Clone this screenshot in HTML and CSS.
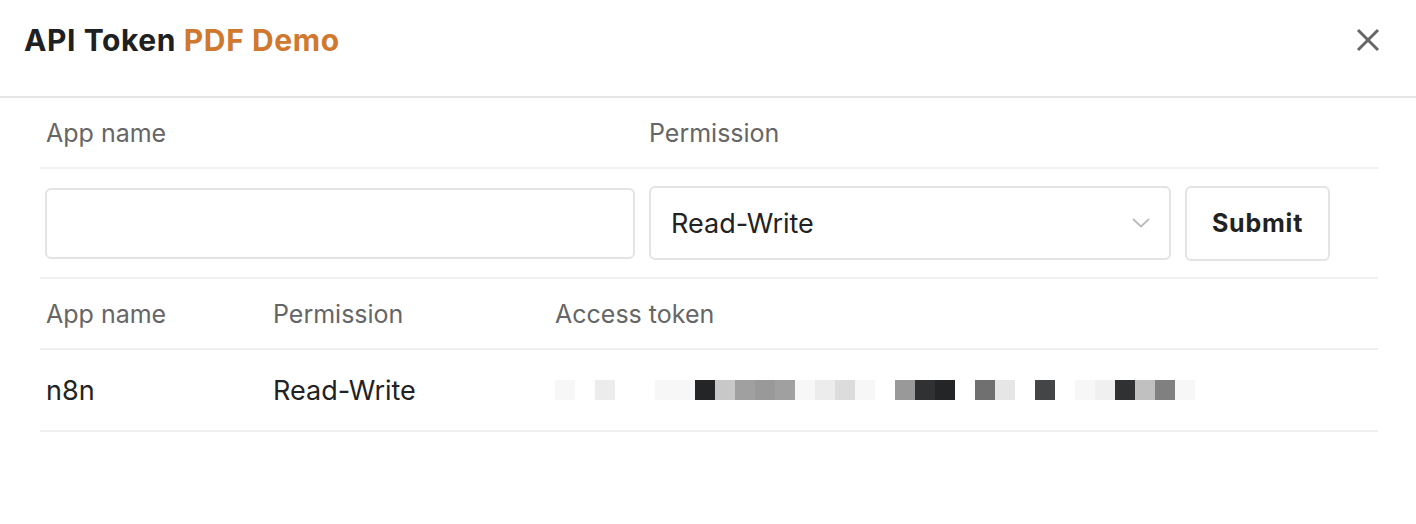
FILE: index.html
```html
<!DOCTYPE html>
<html lang="en">
<head>
<meta charset="utf-8">
<title>API Token</title>
<link rel="stylesheet" href="styles.css">
</head>
<body>
<div class="modal">
  <header class="modal-header">
    <h1 class="title">API Token <span class="accent">PDF Demo</span></h1>
    <button class="close" aria-label="Close">
      <svg width="24" height="24" viewBox="0 0 24 24"><path d="M2 2 L22 22 M22 2 L2 22" stroke="#666" stroke-width="3" fill="none"/></svg>
    </button>
  </header>
  <div class="modal-body">
    <div class="form-grid">
      <div class="cell label">App name</div>
      <div class="cell label">Permission</div>
      <div class="cell label"></div>
      <div class="cell ctrl"><input class="text-input" type="text"></div>
      <div class="cell ctrl">
        <div class="select">
          <span>Read-Write</span>
          <svg width="18" height="10" viewBox="0 0 18 10"><path d="M1 1 L9 8.5 L17 1" stroke="#bbb" stroke-width="1.8" fill="none"/></svg>
        </div>
      </div>
      <div class="cell ctrl"><button class="submit">Submit</button></div>
    </div>
    <div class="token-grid">
      <div class="cell label">App name</div>
      <div class="cell label">Permission</div>
      <div class="cell label">Access token</div>
      <div class="cell data">n8n</div>
      <div class="cell data">Read-Write</div>
      <div class="cell data">
        <div class="pixels">
          <i class="s1"></i><i></i><i class="s2"></i><i></i><i></i><i class="s1"></i><i class="s1"></i><i class="s9"></i><i class="s4"></i><i class="s5"></i><i class="s5b"></i><i class="s5"></i><i class="s1"></i><i class="s2"></i><i class="s3"></i><i class="s1"></i><i></i><i class="s5b"></i><i class="s8"></i><i class="s9"></i><i></i><i class="s6b"></i><i class="s2b"></i><i></i><i class="s7"></i><i></i><i class="s1"></i><i class="s2c"></i><i class="s8"></i><i class="s4b"></i><i class="s6"></i><i class="s1"></i>
        </div>
      </div>
    </div>
  </div>
</div>
</body>
</html>
```

FILE: styles.css
```css
* { box-sizing: border-box; }
html, body { margin: 0; padding: 0; background: #fff; }
body {
  font-family: Inter, "Liberation Sans", sans-serif;
  color: #222;
  width: 1416px;
  height: 524px;
  overflow: hidden;
}
.modal-header {
  height: 98px;
  display: flex;
  align-items: center;
  justify-content: space-between;
  padding: 0 36px 16px 24px;
  border-bottom: 2px solid #e6e6e6;
}
.title {
  margin: 0;
  font-size: 30px;
  font-weight: 700;
  color: #1f2022;
  letter-spacing: 0.6px;
}
.accent { color: #d0782f; }
.close {
  border: 0;
  background: none;
  padding: 0;
  width: 24px;
  height: 24px;
  display: flex;
  margin-top: 0;
}
.modal-body { padding: 0 38px 0 40px; }
.form-grid {
  display: grid;
  grid-template-columns: 603px 536px 1fr;
  grid-template-rows: 71px 110px;
}
.token-grid {
  display: grid;
  grid-template-columns: 227px 282px 1fr;
  grid-template-rows: 71px 82px;
}
.cell {
  display: flex;
  align-items: center;
  padding-left: 6px;
  border-bottom: 2px solid #efefef;
}
.label { font-size: 25px; color: #666; padding-top: 0; }
.data { font-size: 27px; color: #222; padding-top: 0; }
.ctrl { padding-left: 5px; padding-right: 8px; }
.text-input {
  width: 590px;
  height: 71px;
  border: 2px solid #e4e4e4;
  border-radius: 6px;
  font: inherit;
  background: #fff;
}
.select {
  width: 522px;
  height: 74px;
  margin-left: 1px;
  border: 2px solid #e4e4e4;
  border-radius: 6px;
  display: flex;
  align-items: center;
  justify-content: space-between;
  padding: 0 19px 0 20px;
  font-size: 27px;
  color: #222;
}
.submit {
  width: 145px;
  height: 75px;
  margin-left: 1px;
  border: 2px solid #e4e4e4;
  border-radius: 6px;
  background: #fff;
  font-family: inherit;
  font-size: 25px;
  font-weight: 700;
  color: #222;
  letter-spacing: 0.8px;
}
.pixels { display: flex; height: 20px; }
.pixels i { width: 20px; height: 20px; display: block; }
.s1 { background: #f7f7f7; }
.s2 { background: #ececec; }
.s2b { background: #e6e6e6; }
.s2c { background: #f0f0f0; }
.s3 { background: #dcdcdc; }
.s4 { background: #c8c8c8; }
.s4b { background: #c0c0c0; }
.s5 { background: #a0a0a0; }
.s5b { background: #999; }
.s6 { background: #808080; }
.s6b { background: #707070; }
.s7 { background: #444546; }
.s8 { background: #303132; }
.s9 { background: #242526; }
```
